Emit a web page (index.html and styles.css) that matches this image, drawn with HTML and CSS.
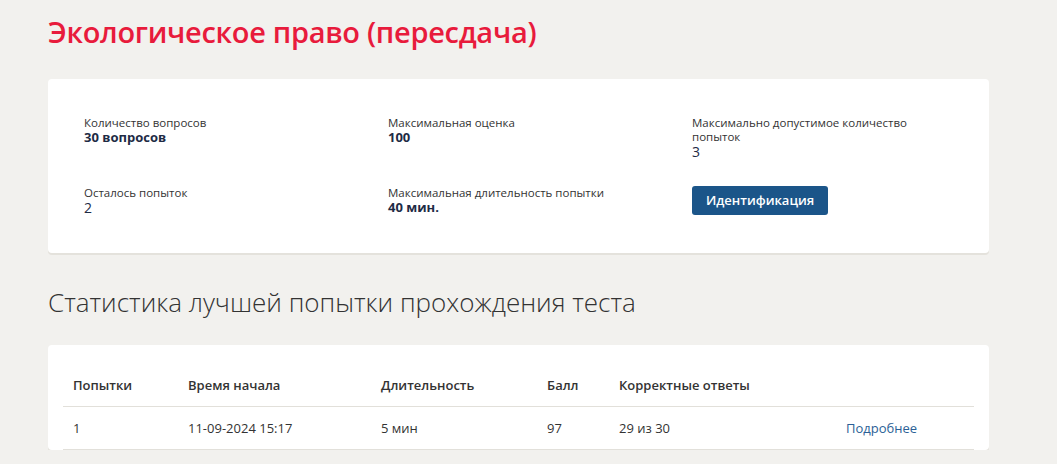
FILE: index.html
```html
<!DOCTYPE html>
<html lang="ru">
<head>
<meta charset="utf-8">
<title>Экологическое право (пересдача)</title>
<link rel="stylesheet" href="styles.css">
</head>
<body>
<main class="page">
  <h1 class="title">Экологическое право (пересдача)</h1>

  <section class="card info">
    <div class="info-grid">
      <div class="field">
        <div class="label">Количество вопросов</div>
        <div class="value">30 вопросов</div>
      </div>
      <div class="field">
        <div class="label">Максимальная оценка</div>
        <div class="value">100</div>
      </div>
      <div class="field">
        <div class="label">Максимально допустимое количество попыток</div>
        <div class="value plain">3</div>
      </div>
      <div class="field">
        <div class="label">Осталось попыток</div>
        <div class="value plain">2</div>
      </div>
      <div class="field">
        <div class="label">Максимальная длительность попытки</div>
        <div class="value">40 мин.</div>
      </div>
      <div class="field">
        <button class="btn" type="button">Идентификация</button>
      </div>
    </div>
  </section>

  <h2 class="subtitle">Статистика лучшей попытки прохождения теста</h2>

  <section class="card stats">
    <table class="table">
      <colgroup>
        <col class="c1"><col class="c2"><col class="c3"><col class="c4"><col class="c5"><col class="c6">
      </colgroup>
      <thead>
        <tr>
          <th>Попытки</th>
          <th>Время начала</th>
          <th>Длительность</th>
          <th>Балл</th>
          <th>Корректные ответы</th>
          <th></th>
        </tr>
      </thead>
      <tbody>
        <tr>
          <td>1</td>
          <td>11-09-2024 15:17</td>
          <td>5 мин</td>
          <td>97</td>
          <td>29 из 30</td>
          <td><a class="more" href="#">Подробнее</a></td>
        </tr>
      </tbody>
    </table>
  </section>
</main>
</body>
</html>
```

FILE: styles.css
```css
* { box-sizing: border-box; }

html, body {
  margin: 0;
  padding: 0;
  background: #f2f1ee;
}

body {
  font-family: "Open Sans", "Noto Sans", sans-serif;
  color: #333;
}

.page {
  padding: 12px 68px 0 48px;
}

.title {
  margin: 0;
  font-family: "Open Sans", sans-serif;
  font-weight: 600;
  font-size: 29px;
  line-height: 40px;
  color: #e81b3c;
  letter-spacing: -0.3px;
}

.card {
  background: #fff;
  border-radius: 4px;
  box-shadow: 0 2px 0 #e4e2dc;
}

.info {
  margin-top: 27px;
  padding: 37px 36px 38px;
}

.info-grid {
  display: grid;
  grid-template-columns: 304px 304px 230px;
  row-gap: 27px;
}

.label {
  font-size: 11.5px;
  line-height: 14px;
  color: #333;
}

.value {
  font-size: 13px;
  line-height: 15px;
  font-weight: 700;
  color: #1e2b45;
}

.value.plain {
  font-weight: 400;
  font-size: 14px;
}

.btn {
  display: inline-block;
  height: 29px;
  padding: 0 14px;
  border: 0;
  border-radius: 3px;
  background: #1b5589;
  color: #fff;
  font-family: "Open Sans", sans-serif;
  font-size: 13px;
  font-weight: 600;
  line-height: 29px;
  cursor: pointer;
}

.subtitle {
  margin: 33px 0 0;
  font-family: "Open Sans", sans-serif;
  font-weight: 300;
  font-size: 26px;
  line-height: 32px;
  color: #333;
}

.stats {
  margin-top: 27px;
  padding: 19px 15px 0;
}

.table {
  width: 100%;
  border-collapse: collapse;
  font-size: 13px;
}

.c1 { width: 115px; }
.c2 { width: 193px; }
.c3 { width: 166px; }
.c4 { width: 72px; }
.c5 { width: 227px; }
.c6 { width: auto; }

.table th,
.table td {
  text-align: left;
  padding: 12px 10px;
  line-height: 18px;
  border-bottom: 1px solid #e2e0da;
}

.table th {
  font-weight: 600;
  color: #333;
}

.table td {
  color: #333;
}

.more {
  color: #2b5f96;
  text-decoration: none;
}
```
